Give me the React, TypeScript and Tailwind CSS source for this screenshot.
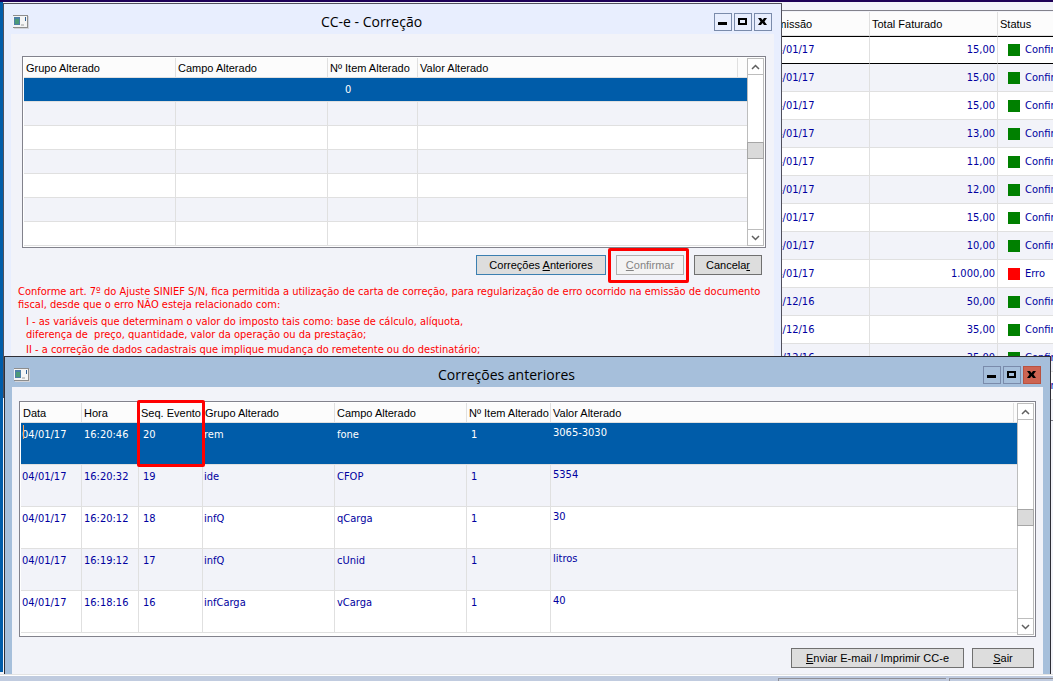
import React, { useState } from 'react';

interface Invoice {
  date: string;
  total: string;
  status: 'Confirmado' | 'Erro';
}

interface Correction {
  date: string;
  time: string;
  seq: string;
  group: string;
  field: string;
  item: string;
  value: string;
}

const invoices: Invoice[] = [
  { date: '04/01/17', total: '15,00', status: 'Confirmado' },
  { date: '04/01/17', total: '15,00', status: 'Confirmado' },
  { date: '04/01/17', total: '15,00', status: 'Confirmado' },
  { date: '04/01/17', total: '13,00', status: 'Confirmado' },
  { date: '04/01/17', total: '11,00', status: 'Confirmado' },
  { date: '04/01/17', total: '12,00', status: 'Confirmado' },
  { date: '04/01/17', total: '15,00', status: 'Confirmado' },
  { date: '04/01/17', total: '10,00', status: 'Confirmado' },
  { date: '04/01/17', total: '1.000,00', status: 'Erro' },
  { date: '29/12/16', total: '50,00', status: 'Confirmado' },
  { date: '29/12/16', total: '35,00', status: 'Confirmado' },
  { date: '29/12/16', total: '35,00', status: 'Confirmado' },
  { date: '29/12/16', total: '35,00', status: 'Confirmado' },
];

const corrections: Correction[] = [
  { date: '04/01/17', time: '16:20:46', seq: '20', group: 'rem', field: 'fone', item: '1', value: '3065-3030' },
  { date: '04/01/17', time: '16:20:32', seq: '19', group: 'ide', field: 'CFOP', item: '1', value: '5354' },
  { date: '04/01/17', time: '16:20:12', seq: '18', group: 'infQ', field: 'qCarga', item: '1', value: '30' },
  { date: '04/01/17', time: '16:19:12', seq: '17', group: 'infQ', field: 'cUnid', item: '1', value: 'litros' },
  { date: '04/01/17', time: '16:18:16', seq: '16', group: 'infCarga', field: 'vCarga', item: '1', value: '40' },
];

const emptyRows = [1, 2, 3, 4, 5, 6];

const AppIcon = () => (
  <svg width="16" height="14" viewBox="0 0 16 14" shapeRendering="crispEdges">
    <rect width="15" height="13" fill="#8d8d8d" />
    <rect x="0" y="1" width="14" height="11" fill="#f4f4f4" />
    <rect x="1" y="2" width="6" height="8" fill="#4c7fa6" />
    <rect x="2" y="4" width="4" height="5" fill="#4a9a78" />
    <rect x="8" y="9" width="3" height="2" fill="#c9c9c9" />
    <rect x="12" y="2" width="1" height="4" fill="#2f5f94" />
    <path d="M15 1h1v13H1v-1h14z" fill="#d2d4da" />
  </svg>
);

const glyphs = {
  min: <path d="M3 8h9v3H3z" fill="#000" />,
  max: <path d="M4 5h7v5H4z" fill="none" stroke="#000" strokeWidth="2" />,
  close: <path d="M3 4h3l1.500 2L9 4h3L9.500 7.500 12 11H9L7.500 9 6 11H3l2.500-3.500z" fill="#000" />,
};

const WindowButton = ({ kind, label, danger }: { kind: keyof typeof glyphs; label: string; danger?: boolean }) => (
  <button
    aria-label={label}
    className={`flex size-[18px] items-center justify-center border ${danger ? 'border-[#b9513f] bg-[#cd6452]' : 'border-[#7a8bab]'}`}
  >
    <svg width="16" height="16" viewBox="0 0 16 16" className="shrink-0">
      {glyphs[kind]}
    </svg>
  </button>
);

const TitleBar = ({ title, active }: { title: string; active?: boolean }) => (
  <header className="flex h-[30px] items-center px-[9px] pt-[6px]">
    <AppIcon />
    <h1 className="flex-1 text-center font-['Open_Sans',sans-serif] text-[14px] leading-5 text-black">{title}</h1>
    <div className="flex gap-[2px]">
      <WindowButton kind="min" label="Minimizar" />
      <WindowButton kind="max" label="Maximizar" />
      <WindowButton kind="close" label="Fechar" danger={active} />
    </div>
  </header>
);

const ScrollBar = () => (
  <div className="mr-px flex w-[17px] shrink-0 flex-col border border-[#bdbdbd] bg-white">
    <button aria-label="Rolar para cima" className="flex h-4 items-center justify-center border-b border-[#bdbdbd]">
      <svg width="9" height="6" viewBox="0 0 9 6">
        <path d="M1 5l3.500-3.500L8 5" fill="none" stroke="#606060" strokeWidth="1.500" />
      </svg>
    </button>
    <div className="flex flex-1 items-center pb-1">
      <div className="-mx-px h-[17px] flex-1 border border-[#a6a6a6] bg-[#dadada]" />
    </div>
    <button aria-label="Rolar para baixo" className="flex h-4 items-center justify-center border-t border-[#bdbdbd]">
      <svg width="9" height="6" viewBox="0 0 9 6">
        <path d="M1 1l3.500 3.500L8 1" fill="none" stroke="#606060" strokeWidth="1.500" />
      </svg>
    </button>
  </div>
);

const Th = ({ children, className = '' }: { children?: React.ReactNode; className?: string }) => (
  <th
    className={`h-5 overflow-hidden border-b border-[#e0e0e0] bg-[#fcfcfc] p-0 pl-[2px] text-left font-['Liberation_Sans',Arial,sans-serif] font-normal whitespace-nowrap text-black not-last:border-r ${className}`}
  >
    {children}
  </th>
);

const FormButton = ({ children, className = '', disabled }: { children: React.ReactNode; className?: string; disabled?: boolean }) => (
  <button
    disabled={disabled}
    className={`h-5 border font-['Liberation_Sans',Arial,sans-serif] text-[11px] leading-4 whitespace-nowrap ${
      disabled ? 'border-[#b0b0b0] bg-[#f3f3f3] text-[#838383]' : 'bg-[#dddddd] text-black'
    } ${className}`}
  >
    {children}
  </button>
);

const InvoiceTable = () => (
  <div className="ml-[768px] h-[411px] overflow-hidden border-y border-[#82828c] pt-px">
    <table className="w-full table-fixed border-separate border-spacing-0">
      <colgroup>
        <col className="w-[102px]" />
        <col className="w-32" />
        <col />
      </colgroup>
      <thead>
        <tr>
          <Th className="h-6">Emissão</Th>
          <Th className="h-6">Total Faturado</Th>
          <Th className="h-6">Status</Th>
        </tr>
      </thead>
      <tbody>
        {invoices.map((inv, i) => {
          const line = i === 0 ? 'border-y border-y-black' : 'border-b border-b-[#e0e0e0]';
          const cell = `h-7 p-0 not-last:border-r border-r-[#e0e0e0] ${line}`;
          return (
            <tr key={i} className={i % 2 ? 'bg-[#f2f3f9]' : 'bg-white'}>
              <td className={`${cell} pl-[2px]`}>{inv.date}</td>
              <td className={`${cell} pr-[2px] text-right`}>{inv.total}</td>
              <td className={`${cell} overflow-hidden`}>
                <div className="flex items-center gap-[5px] pl-[10px]">
                  <span className={`size-3 shrink-0 ${inv.status === 'Erro' ? 'bg-[#ff0000]' : 'bg-[#008000]'}`} />
                  {inv.status}
                </div>
              </td>
            </tr>
          );
        })}
      </tbody>
    </table>
  </div>
);

const CorrectionWindow = () => (
  <section className="absolute top-[3px] right-[271px] left-[3px] h-[395px] border border-[#50505c] bg-[#e8eefe]">
    <TitleBar title="CC-e - Correção" />
    <div className="mx-[7px] h-[362px] bg-[#f2f3f9] pt-[22px] pr-2 pl-[11px]">
      <div className="flex border border-[#82828c] bg-white py-px pl-px">
        <table className="flex-1 table-fixed border-separate border-spacing-0">
          <colgroup>
            <col className="w-[152px]" />
            <col className="w-[152px]" />
            <col className="w-[90px]" />
            <col />
            <col className="w-[9px]" />
          </colgroup>
          <thead>
            <tr>
              <Th>Grupo Alterado</Th>
              <Th>Campo Alterado</Th>
              <Th>Nº Item Alterado</Th>
              <Th>Valor Alterado</Th>
              <Th />
            </tr>
          </thead>
          <tbody>
            <tr className="bg-[#005ca9] text-white">
              <td className="h-6 border-b border-[#e0e0e0] p-0" />
              <td className="border-b border-[#e0e0e0] p-0" />
              <td className="border-b border-[#e0e0e0] p-0 pl-[17px]">0</td>
              <td colSpan={2} className="border-b border-[#e0e0e0] p-0" />
            </tr>
            {emptyRows.map(n => (
              <tr key={n} className={n % 2 ? 'bg-[#f2f3f9]' : 'bg-white'}>
                <td className="h-6 border-r border-b border-[#e0e0e0] p-0" />
                <td className="border-r border-b border-[#e0e0e0] p-0" />
                <td className="border-r border-b border-[#e0e0e0] p-0" />
                <td colSpan={2} className="border-b border-[#e0e0e0] p-0" />
              </tr>
            ))}
          </tbody>
        </table>
        <ScrollBar />
      </div>

      <div className="mt-[7px] flex justify-end gap-[10px] pr-1">
        <FormButton className="w-[130px] border-[#3c7fb1]">
          Correções <u>A</u>nteriores
        </FormButton>
        <div className="relative">
          <FormButton disabled className="w-[68px]">
            <u>C</u>onfirmar
          </FormButton>
          <div className="pointer-events-none absolute -top-[7px] -right-[5px] -bottom-2 -left-2 rounded-[2px] border-3 border-[#ff0000]" />
        </div>
        <FormButton className="w-[68px] border-[#707070]">
          Cancela<u>r</u>
        </FormButton>
      </div>

      <div className="-ml-1 pt-[10px] leading-[13px] whitespace-nowrap text-[#ff0000]">
        <p>
          Conforme art. 7º do Ajuste SINIEF S/N, fica permitida a utilização de carta de correção, para regularização de erro ocorrido na emissão de documento
          <br />
          fiscal, desde que o erro NÃO esteja relacionado com:
        </p>
        <p className="mt-1 ml-2 whitespace-pre">
          {'I - as variáveis que determinam o valor do imposto tais como: base de cálculo, alíquota,\ndiferença de  preço, quantidade, valor da operação ou da prestação;'}
        </p>
        <p className="mt-[2px] ml-2">II - a correção de dados cadastrais que implique mudança do remetente ou do destinatário;</p>
      </div>
    </div>
  </section>
);

const PreviousCorrectionsWindow = () => {
  const [selected, setSelected] = useState(0);

  return (
    <section className="absolute top-[356px] right-[2px] bottom-[7px] left-1 flex flex-col border border-b-0 border-[#2e2e36] bg-[#a6bfdb]">
      <TitleBar title="Correções anteriores" active />
      <div className="mx-[7px] flex-1 bg-[#f2f3f9] px-[7px] pt-[14px]">
        <div className="flex border border-[#82828c] bg-white py-px pl-px">
          <div className="relative flex-1 pb-[2px]">
            <table className="w-full table-fixed border-separate border-spacing-0">
              <colgroup>
                <col className="w-[61px]" />
                <col className="w-[57px]" />
                <col className="w-16" />
                <col className="w-[132px]" />
                <col className="w-[132px]" />
                <col className="w-[84px]" />
                <col />
                <col className="w-[3px]" />
              </colgroup>
              <thead>
                <tr>
                  <Th>Data</Th>
                  <Th>Hora</Th>
                  <Th>Seq. Evento</Th>
                  <Th>Grupo Alterado</Th>
                  <Th>Campo Alterado</Th>
                  <Th>Nº Item Alterado</Th>
                  <Th>Valor Alterado</Th>
                  <Th className="pl-0" />
                </tr>
              </thead>
              <tbody>
                {corrections.map((c, i) => {
                  const isSelected = i === selected;
                  const cell = `h-[42px] border-b border-b-[#e0e0e0] p-0 pt-[5px] align-top ${isSelected ? '' : 'border-r border-r-[#e0e0e0]'}`;
                  return (
                    <tr
                      key={c.seq}
                      onClick={() => setSelected(i)}
                      className={isSelected ? 'bg-[#005ca9] text-white' : i % 2 ? 'bg-[#f2f3f9]' : 'bg-white'}
                    >
                      <td className={`${cell} pl-px`}>{c.date}</td>
                      <td className={`${cell} pl-[2px]`}>{c.time}</td>
                      <td className={`${cell} pl-1`}>{c.seq}</td>
                      <td className={`${cell} pl-px`}>{c.group}</td>
                      <td className={`${cell} pl-[2px]`}>{c.field}</td>
                      <td className={`${cell} pl-1`}>{c.item}</td>
                      <td colSpan={2} className="border-b border-b-[#e0e0e0] p-0 pt-[3px] pl-[2px] align-top">{c.value}</td>
                    </tr>
                  );
                })}
              </tbody>
            </table>
            {/* edit caret in the first cell */}
            <div className="absolute top-[22px] left-[2px] h-[14px] w-px bg-[#ffa456]" />
            {/* highlighted column */}
            <div className="pointer-events-none absolute -top-[3px] left-[116px] h-[67px] w-[68px] rounded-[2px] border-3 border-[#ff0000]" />
          </div>
          <ScrollBar />
        </div>

        <div className="mt-[11px] flex justify-end gap-2 pr-[2px]">
          <FormButton className="w-[173px] border-[#707070]">
            <u>E</u>nviar E-mail / Imprimir CC-e
          </FormButton>
          <FormButton className="w-[62px] border-[#707070]">
            <u>S</u>air
          </FormButton>
        </div>
      </div>
    </section>
  );
};

const App: React.FC = () => (
  <main className="relative flex min-h-screen flex-col overflow-hidden bg-[#f2f3f9] font-['DejaVu_Sans_Condensed','DejaVu_Sans',Tahoma,sans-serif] text-[11px] leading-[14px] text-[#0000a0]">
    <div className="h-[2px] bg-[#1d0057]" />
    <div className="flex flex-1">
      <div className="mb-[2px] w-[3px] bg-[#005ca9]" />
      <div className="-ml-[3px] flex-1 pt-2">
        <InvoiceTable />
      </div>
    </div>
    <footer className="flex h-[7px] justify-end gap-[3px] border-t border-[#e3e3e3] bg-[#c0cbdf] pt-[3px] shadow-[inset_0_1px_0_#ffffff]">
      <div className="w-[168px] border-t border-l border-[#8e8e96]" />
      <div className="w-[104px] border-t border-l border-[#8e8e96]" />
    </footer>

    <CorrectionWindow />
    <PreviousCorrectionsWindow />
  </main>
);

export default App;
